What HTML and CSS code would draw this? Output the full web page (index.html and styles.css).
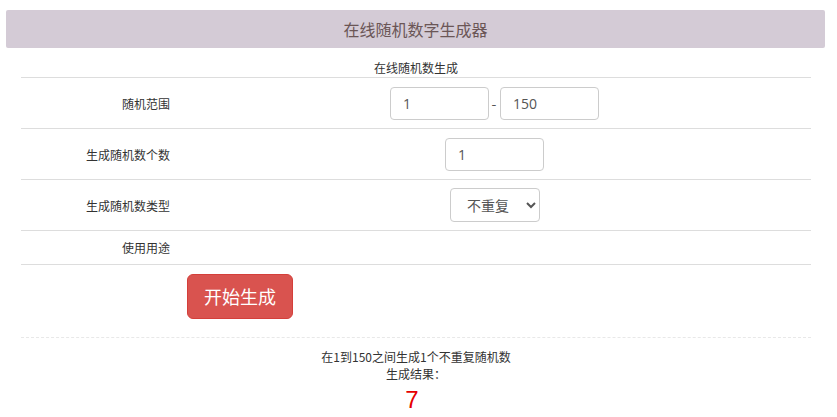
FILE: index.html
```html
<!DOCTYPE html>
<html lang="zh-CN">
<head>
<meta charset="utf-8">
<title>在线随机数字生成器</title>
<link rel="stylesheet" href="styles.css">
</head>
<body>
<div class="page">
  <div class="header">在线随机数字生成器</div>
  <div class="panel">
    <div class="caption">在线随机数生成</div>
    <div class="row">
      <div class="label">随机范围</div>
      <div class="field center">
        <input class="inp" type="text" value="1">
        <span class="dash">-</span>
        <input class="inp" type="text" value="150">
      </div>
    </div>
    <div class="row">
      <div class="label">生成随机数个数</div>
      <div class="field center">
        <input class="inp" type="text" value="1">
      </div>
    </div>
    <div class="row">
      <div class="label">生成随机数类型</div>
      <div class="field center">
        <select class="sel"><option>不重复</option><option>可重复</option></select>
      </div>
    </div>
    <div class="row short">
      <div class="label">使用用途</div>
      <div class="field"></div>
    </div>
    <div class="row action">
      <div class="label"></div>
      <div class="field"><button class="btn">开始生成</button></div>
    </div>
    <div class="result">
      <div>在1到150之间生成1个不重复随机数</div>
      <div>生成结果：</div>
      <div class="num">7</div>
    </div>
  </div>
</div>
</body>
</html>
```
FILE: styles.css
```css
html, body {
  margin: 0;
  padding: 0;
  background: #fff;
}
body {
  font-family: "Microsoft YaHei", "Noto Sans CJK SC", "Noto Sans", sans-serif;
  color: #333;
  font-size: 12px;
}
.page {
  padding: 10px 12px 0 6px;
}
.header {
  height: 38px;
  line-height: 38px;
  background: #d4cbd6;
  border-radius: 2px;
  text-align: center;
  font-size: 16px;
  color: #6b5656;
}
.panel {
  margin: 10px 14px 0 15px;
}
.caption {
  text-align: center;
  line-height: 19px;
  border-bottom: 1px solid #ddd;
}
.row {
  display: grid;
  grid-template-columns: 157px 1fr;
  border-bottom: 1px solid #ddd;
  height: 50px;
}
.row.short {
  height: 33px;
}
.row.action {
  height: 72px;
  border-bottom: 1px dashed #e8e8e8;
}
.label {
  text-align: right;
  padding-right: 8px;
  display: flex;
  align-items: center;
  justify-content: flex-end;
}
.field {
  display: flex;
  align-items: center;
}
.field.center {
  justify-content: center;
}
.inp {
  box-sizing: border-box;
  width: 99px;
  height: 33px;
  border: 1px solid #ccc;
  border-radius: 4px;
  padding: 0 12px;
  font-family: "Open Sans", "Noto Sans", sans-serif;
  font-size: 14px;
  color: #555;
  outline: none;
  margin: 0;
}
.dash {
  font-size: 14px;
  color: #555;
  width: 12px;
  text-align: center;
  margin-left: -1px;
}
.sel {
  box-sizing: border-box;
  width: 90px;
  height: 34px;
  border: 1px solid #ccc;
  border-radius: 4px;
  padding: 0 8px 0 12px;
  font-family: "Microsoft YaHei", "Noto Sans CJK SC", sans-serif;
  font-size: 14px;
  color: #555;
  background: #fff;
  margin: 0 0 0 1px;
}
.btn {
  margin: -10px 0 0 9px;
  width: 106px;
  height: 45px;
  background: #d9534f;
  border: 1px solid #d43f3a;
  border-radius: 6px;
  color: #fff;
  font-family: "Microsoft YaHei", "Noto Sans CJK SC", sans-serif;
  font-size: 18px;
  padding: 0;
}
.result {
  text-align: center;
  padding-top: 10px;
  line-height: 17px;
}
.num {
  color: #e60000;
  font-family: "Liberation Sans", Arial, sans-serif;
  font-size: 24px;
  line-height: 30px;
  margin-top: 3px;
  padding-right: 8px;
}
```
